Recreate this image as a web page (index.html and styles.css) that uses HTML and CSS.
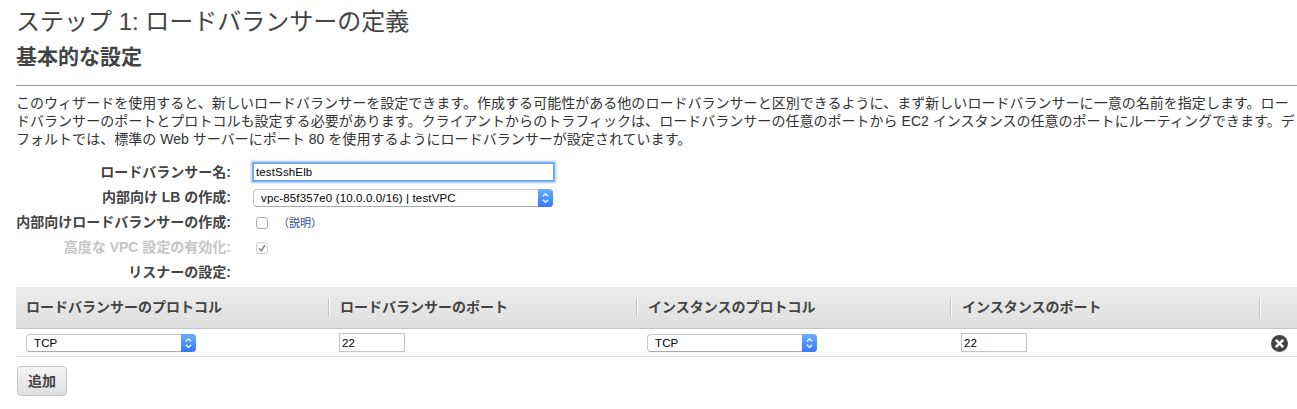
FILE: index.html
```html
<!DOCTYPE html>
<html lang="ja">

<head>
    <meta charset="UTF-8">
    <title>ステップ 1: ロードバランサーの定義</title>
    <link rel="stylesheet" href="styles.css">
</head>

<body>
    <div class="wizard">
        <h1>ステップ 1: ロードバランサーの定義</h1>
        <h2>基本的な設定</h2>
        <p class="intro">
            このウィザードを使用すると、新しいロードバランサーを設定できます。作成する可能性がある他のロードバランサーと区別できるように、まず新しいロードバランサーに一意の名前を指定します。ロー<br>
            ドバランサーのポートとプロトコルも設定する必要があります。クライアントからのトラフィックは、ロードバランサーの任意のポートから EC2 インスタンスの任意のポートにルーティングできます。デ<br>
            フォルトでは、標準の Web サーバーにポート 80 を使用するようにロードバランサーが設定されています。
        </p>

        <div class="form">
            <div class="row">
                <label for="name">ロードバランサー名:</label>
                <input id="name" class="name-input" type="text" value="testSshElb" spellcheck="false">
            </div>
            <div class="row">
                <label>内部向け LB の作成:</label>
                <div class="select vpc">
                    <span>vpc-85f357e0 (10.0.0.0/16) | testVPC</span>
                    <svg class="arrows" viewBox="0 0 15 18"><path d="M4.8 7.4 7.5 4.8 10.2 7.4M4.8 10.8 7.5 13.4 10.2 10.8"/></svg>
                </div>
            </div>
            <div class="row">
                <label for="internal">内部向けロードバランサーの作成:</label>
                <input id="internal" class="check" type="checkbox">
                <a class="help">（説明）</a>
            </div>
            <div class="row disabled">
                <label>高度な VPC 設定の有効化:</label>
                <span class="check">
                    <svg viewBox="0 0 10 10"><path d="M2 5.3 4.2 7.7 8 2"/></svg>
                </span>
            </div>
            <div class="row">
                <label>リスナーの設定:</label>
            </div>
        </div>

        <div class="listeners">
            <div class="grid head">
                <div class="th">ロードバランサーのプロトコル</div>
                <div class="th">ロードバランサーのポート</div>
                <div class="th">インスタンスのプロトコル</div>
                <div class="th">インスタンスのポート</div>
            </div>
            <div class="grid body">
                <div class="td first">
                    <div class="select">
                        <span>TCP</span>
                        <svg class="arrows" viewBox="0 0 15 18"><path d="M4.8 7.4 7.5 4.8 10.2 7.4M4.8 10.8 7.5 13.4 10.2 10.8"/></svg>
                    </div>
                </div>
                <div class="td"><input class="port" type="text" value="22"></div>
                <div class="td">
                    <div class="select">
                        <span>TCP</span>
                        <svg class="arrows" viewBox="0 0 15 18"><path d="M4.8 7.4 7.5 4.8 10.2 7.4M4.8 10.8 7.5 13.4 10.2 10.8"/></svg>
                    </div>
                </div>
                <div class="td"><input class="port" type="text" value="22"></div>
                <div class="td">
                    <svg class="remove" viewBox="0 0 17 17">
                        <circle cx="8.5" cy="8.5" r="8.5"/>
                        <path d="M4.8 4.8 12.2 12.2M12.2 4.8 4.8 12.2"/>
                    </svg>
                </div>
            </div>
        </div>

        <button class="add">追加</button>
    </div>
</body>

</html>
```
FILE: styles.css
```css
body {
    margin: 0;
    background: #fff;
    color: #444;
    font-family: "Liberation Sans", "Noto Sans CJK JP", sans-serif;
    font-size: 14px;
    line-height: 18px;
    overflow: hidden;
}

.wizard {
    padding: 5px 0 0 16px;
}

h1 {
    margin: 0;
    font-size: 24px;
    font-weight: normal;
    line-height: 34px;
}

h2 {
    margin: 0;
    height: 46px;
    font-size: 21px;
    line-height: 36px;
    border-bottom: 1px solid #999;
}

.intro {
    margin: 8px 0 0;
    white-space: nowrap;
    color: #333;
    letter-spacing: 0.03px;
}

.form {
    padding-top: 11px;
}

.row {
    display: flex;
    align-items: center;
    height: 25px;
}

.row label {
    width: 215px;
    margin-right: 22px;
    text-align: right;
    font-weight: bold;
    white-space: nowrap;
}

input,
.select {
    box-sizing: border-box;
    margin: 0;
    font-family: "Liberation Sans", sans-serif;
    font-size: 11.5px;
    letter-spacing: 0.14px;
    color: #000;
}

.name-input {
    width: 301px;
    height: 18px;
    padding: 1px 2px 0;
    border: 1px solid #6ea5ee;
    outline: none;
    box-shadow: 0 0 0 1px #78abef, 0 0 2px 2px #a9cbf7;
}

.select {
    display: flex;
    justify-content: space-between;
    width: 170px;
    height: 18px;
    padding-left: 7px;
    border: 1px solid #c6c6c6;
    border-bottom-color: #ababab;
    border-radius: 4px;
    line-height: 17px;
}

.vpc {
    width: 300px;
    margin-top: 2px;
}

.arrows {
    width: 15px;
    height: 18px;
    margin: -1px -1px 0 0;
    border-radius: 0 4px 4px 0;
    background: linear-gradient(#6cb0fb, #3576fb);
    fill: none;
    stroke: #fff;
    stroke-width: 1.3;
}

.check {
    appearance: none;
    box-sizing: border-box;
    width: 12px;
    height: 12px;
    margin: 3px 0 0 3px;
    border: 1px solid #aaa;
    border-radius: 3px;
    background: #fff;
}

.check svg {
    display: block;
    width: 10px;
    height: 10px;
    fill: none;
    stroke: #888;
    stroke-width: 1.5;
}

.help {
    margin: 2px 0 0 10px;
    font-size: 11px;
    color: #2d4b9b;
}

.disabled {
    color: #c4c4c4;
}

.disabled .check {
    border-color: #ccc;
}

.listeners {
    margin-top: 3px;
}

.grid {
    display: grid;
    grid-template-columns: 314px 308px 314px 309px 1fr;
    align-items: center;
}

.head {
    height: 41px;
    border-bottom: 1px solid #c4c4c4;
    background: linear-gradient(#ededed, #dedede);
}

.th {
    box-sizing: border-box;
    height: 19px;
    padding-left: 10px;
    border-right: 1px solid #f8f8f8;
    box-shadow: inset -1px 0 #c6c6c6;
    font-weight: bold;
    line-height: 19px;
}

.body {
    height: 27px;
    border-bottom: 1px solid #ddd;
}

.td {
    display: flex;
    padding-left: 9px;
}

.first {
    padding-left: 10px;
}

.port {
    width: 66px;
    height: 19px;
    padding: 1px 2px 0;
    border: 1px solid #c4c4c4;
}

.remove {
    width: 17px;
    height: 17px;
    margin: 1px 0 0 1px;
    fill: #444;
}

.remove path {
    stroke: #fff;
    stroke-width: 2.5;
}

.add {
    display: block;
    width: 50px;
    height: 30px;
    margin: 9px 0 0 1px;
    padding: 0 0 2px;
    border: 1px solid #c4c4c4;
    border-radius: 4px;
    background: linear-gradient(#f4f4f4, #dfdfdf);
    color: #444;
    font-family: inherit;
    font-size: 14px;
    font-weight: bold;
}
```
